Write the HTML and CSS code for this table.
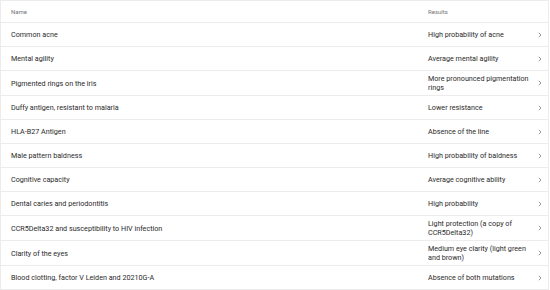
FILE: index.html
```html
<!DOCTYPE html>
<html>
<head>
<meta charset="utf-8">
<link rel="stylesheet" href="styles.css">
</head>
<body>
<table class="results">
  <thead>
    <tr><th class="c-name">Name</th><th class="c-res">Results</th><th class="c-go"></th></tr>
  </thead>
  <tbody>
    <tr><td class="c-name">Common acne</td><td class="c-res">High probability of acne</td><td class="c-go"><svg class="chev" viewBox="0 0 4 6"><path d="M0.8 0.8 L3 3 L0.8 5.2"/></svg></td></tr>
    <tr><td class="c-name">Mental agility</td><td class="c-res">Average mental agility</td><td class="c-go"><svg class="chev" viewBox="0 0 4 6"><path d="M0.8 0.8 L3 3 L0.8 5.2"/></svg></td></tr>
    <tr><td class="c-name">Pigmented rings on the iris</td><td class="c-res">More pronounced pigmentation rings</td><td class="c-go"><svg class="chev" viewBox="0 0 4 6"><path d="M0.8 0.8 L3 3 L0.8 5.2"/></svg></td></tr>
    <tr><td class="c-name">Duffy antigen, resistant to malaria</td><td class="c-res">Lower resistance</td><td class="c-go"><svg class="chev" viewBox="0 0 4 6"><path d="M0.8 0.8 L3 3 L0.8 5.2"/></svg></td></tr>
    <tr><td class="c-name">HLA-B27 Antigen</td><td class="c-res">Absence of the line</td><td class="c-go"><svg class="chev" viewBox="0 0 4 6"><path d="M0.8 0.8 L3 3 L0.8 5.2"/></svg></td></tr>
    <tr><td class="c-name">Male pattern baldness</td><td class="c-res">High probability of baldness</td><td class="c-go"><svg class="chev" viewBox="0 0 4 6"><path d="M0.8 0.8 L3 3 L0.8 5.2"/></svg></td></tr>
    <tr><td class="c-name">Cognitive capacity</td><td class="c-res">Average cognitive ability</td><td class="c-go"><svg class="chev" viewBox="0 0 4 6"><path d="M0.8 0.8 L3 3 L0.8 5.2"/></svg></td></tr>
    <tr><td class="c-name">Dental caries and periodontitis</td><td class="c-res">High probability</td><td class="c-go"><svg class="chev" viewBox="0 0 4 6"><path d="M0.8 0.8 L3 3 L0.8 5.2"/></svg></td></tr>
    <tr><td class="c-name">CCR5Delta32 and susceptibility to HIV infection</td><td class="c-res">Light protection (a copy of CCR5Delta32)</td><td class="c-go"><svg class="chev" viewBox="0 0 4 6"><path d="M0.8 0.8 L3 3 L0.8 5.2"/></svg></td></tr>
    <tr><td class="c-name">Clarity of the eyes</td><td class="c-res">Medium eye clarity (light green and brown)</td><td class="c-go"><svg class="chev" viewBox="0 0 4 6"><path d="M0.8 0.8 L3 3 L0.8 5.2"/></svg></td></tr>
    <tr><td class="c-name">Blood clotting, factor V Leiden and 20210G-A</td><td class="c-res">Absence of both mutations</td><td class="c-go"><svg class="chev" viewBox="0 0 4 6"><path d="M0.8 0.8 L3 3 L0.8 5.2"/></svg></td></tr>
  </tbody>
</table>
</body>
</html>
```

FILE: styles.css
```css
html, body {
  margin: 0;
  padding: 0;
  background: #ffffff;
}
body {
  font-family: Roboto, "Liberation Sans", Arial, sans-serif;
  color: #2a2a2a;
}
.results {
  width: 549px;
  border-collapse: collapse;
  table-layout: fixed;
  border: 1px solid #ececec;
}
.results th,
.results td {
  border-bottom: 1px solid #ececec;
  padding: 3px 0 3px 10px;
  text-align: left;
  vertical-align: middle;
}
.results th {
  height: 15px;
  font-size: 6px;
  font-weight: 400;
  color: #757575;
  line-height: 8px;
}
.results td {
  height: 17px;
  font-size: 7.2px;
  line-height: 9px;
}
.c-name { width: 407px; }
.c-res { width: 104px; }
.results .c-go {
  width: 16px;
  padding: 0;
  text-align: center;
}
.chev {
  display: block;
  width: 4px;
  height: 6px;
  margin: 0 auto;
  fill: none;
  stroke: #8a8a8a;
  stroke-width: 0.9;
}
```
